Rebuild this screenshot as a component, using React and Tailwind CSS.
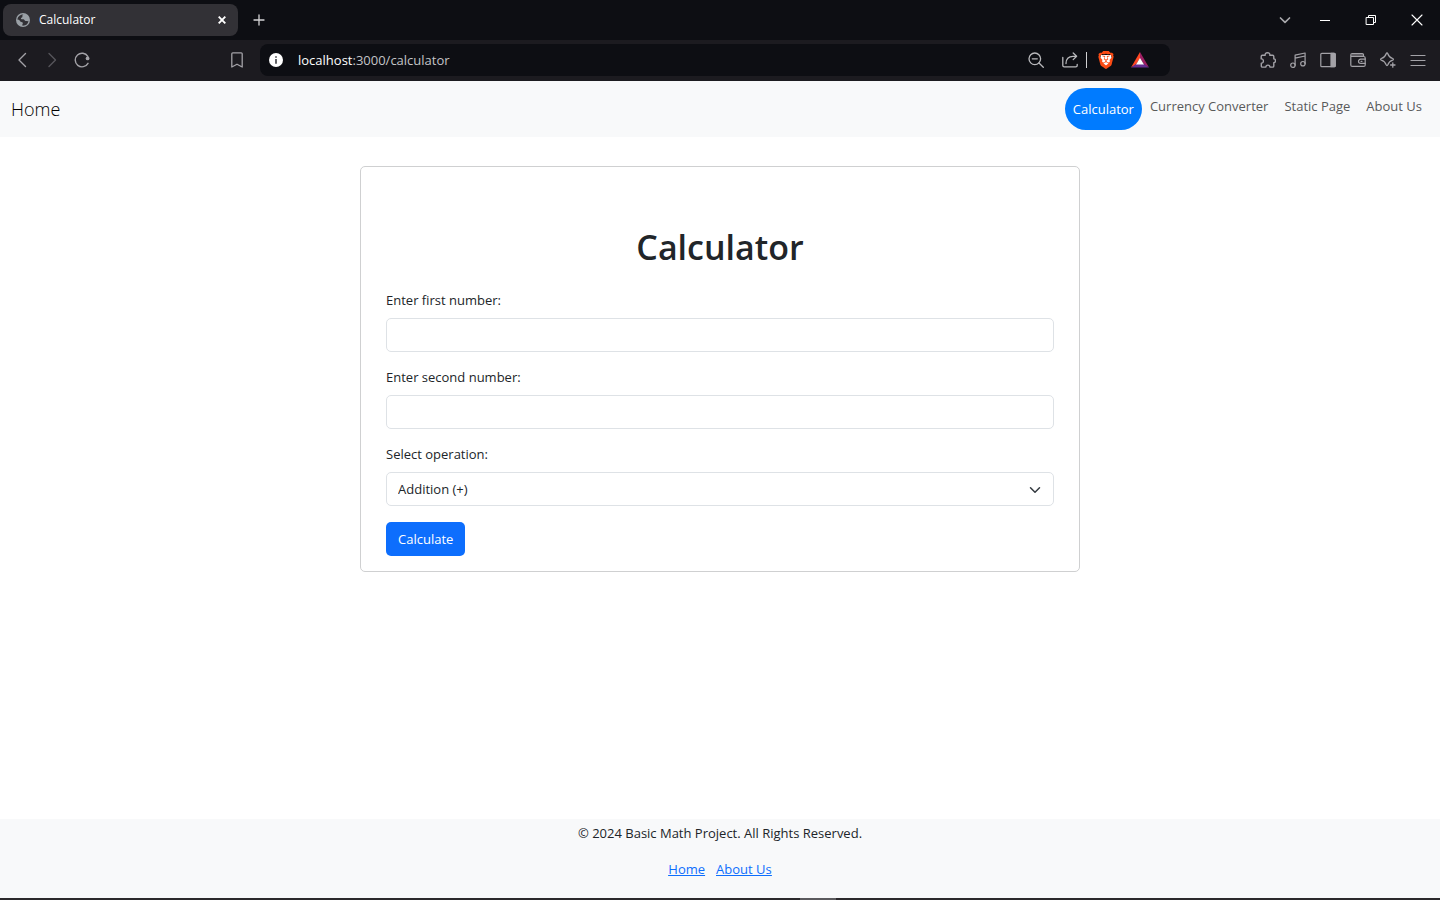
import React from 'react';
import { SiBrave } from 'react-icons/si';

function Icon({ children, className = '', width = 1.2 }) {
  return (
    <svg
      viewBox="0 0 16 16"
      className={`size-4 shrink-0 ${className}`}
      fill="none"
      stroke="currentColor"
      strokeWidth={width}
      strokeLinecap="round"
      strokeLinejoin="round"
      aria-hidden="true"
    >
      {children}
    </svg>
  );
}

function IconButton({ label, className = '', children }) {
  return (
    <button type="button" aria-label={label} className={`flex shrink-0 items-center justify-center ${className}`}>
      {children}
    </button>
  );
}

function TabStrip() {
  return (
    <div className="flex h-10 items-center bg-[#0d0e13] pl-[3px] text-[#d4d4d6]">
      <div className="flex h-8 w-[235px] items-center rounded-lg bg-[#323136] pr-2 pl-3">
        <svg viewBox="0 0 16 16" className="size-4 shrink-0" aria-hidden="true">
          <circle cx="8" cy="8" r="7" fill="#9aa0a6" />
          <path
            d="M8.6 2.6c-.9.2-1.4 1-1.2 1.8.1.7-.4 1.1-1 1.3-.6.1-.5.8-.2 1.3.3.4 1.500.1 2.300.3.9.2 1 1.100 1.500 1.400.7.4 1.900-.1 2.500.6l1-.5a5.700 5.700 0 0 1-5.600 4.900c-.8-.1-.7-.9-.4-1.400.3-.5.6-1.200.1-1.700-.6-.6-1.700-.3-2.300-1C4.800 8.800 4.500 8 3.700 7.800L2.300 7.400A5.800 5.800 0 0 1 8.600 2.600Z"
            fill="#323136"
          />
        </svg>
        <span className="ml-2 flex-1 text-[12px] leading-4 text-white">Calculator</span>
        <IconButton label="Close tab" className="size-4 text-white">
          <Icon width={1.9}>
            <path d="M4.700 4.700 11.300 11.300M11.300 4.700 4.700 11.300" strokeLinecap="butt" />
          </Icon>
        </IconButton>
      </div>
      <IconButton label="New tab" className="ml-[13px] size-4">
        <Icon width={1.3}>
          <path d="M8 3v10M3 8h10" />
        </Icon>
      </IconButton>
      <div className="flex-1" />
      <IconButton label="Search tabs" className="h-10 w-[34px] text-[#a9a9ad]">
        <Icon width={1.7}>
          <path d="m3.500 6 4.500 4.300L12.500 6" />
        </Icon>
      </IconButton>
      <IconButton label="Minimize" className="h-10 w-[46px] text-white">
        <Icon width={1}>
          <path d="M3 8.500h10" strokeLinecap="butt" />
        </Icon>
      </IconButton>
      <IconButton label="Restore" className="h-10 w-[46px] text-white">
        <Icon width={1}>
          <path d="M3.500 5.500h7v7h-7zM5.500 5.500v-2h7v7h-2" strokeLinejoin="miter" />
        </Icon>
      </IconButton>
      <IconButton label="Close window" className="h-10 w-[46px] text-white">
        <Icon width={1.1}>
          <path d="m3 3 10 10M13 3 3 13" />
        </Icon>
      </IconButton>
    </div>
  );
}

function Toolbar() {
  return (
    <div className="flex h-[41px] items-center border-b border-[#1c1b20] bg-[#1c1b20] px-3.5 text-[#a3a2a7]">
      <div className="flex gap-3.5">
        <IconButton label="Back">
          <Icon width={1.4}>
            <path d="M11.500 1.500 5 8l6.500 6.500" />
          </Icon>
        </IconButton>
        <IconButton label="Forward" className="text-[#56555a]">
          <Icon width={1.4}>
            <path d="M5 1.500 11.500 8 5 14.500" />
          </Icon>
        </IconButton>
        <IconButton label="Reload">
          <Icon width={1.4}>
            <path d="M13.800 4.400A6.800 6.800 0 1 0 14 11.300" />
            <circle cx="13.600" cy="6.400" r="1.900" fill="currentColor" stroke="none" />
          </Icon>
        </IconButton>
      </div>
      <IconButton label="Bookmark this page" className="ml-[139px]">
        <Icon width={1.3}>
          <path d="M3.800.8h8.400c.6 0 1 .4 1 1v13.200L8 12.200 2.800 15V1.800c0-.6.4-1 1-1Z" />
        </Icon>
      </IconButton>
      <div className="ml-[15px] flex h-8 flex-1 items-center rounded-lg bg-[#0d0e13] pr-[21px] pl-2 text-[#b9b9bc]">
        <IconButton label="View site information">
          <svg viewBox="0 0 16 16" className="size-4" aria-hidden="true">
            <circle cx="8" cy="8" r="7" fill="#fff" />
            <path d="M7.200 4.200h1.600v1.600H7.200zM7.200 7h1.600v4.800H7.200z" fill="#3c3c42" />
          </svg>
        </IconButton>
        <p className="ml-3.5 flex-1 text-[13px] leading-5 text-[#c4c4c7]">
          <span className="text-white">localhost</span>:3000/calculator
        </p>
        <IconButton label="Zoom out">
          <Icon width={1.3}>
            <circle cx="6.800" cy="6.800" r="5.800" />
            <path d="m11 11 4.300 4.300M4.300 6.800h5" />
          </Icon>
        </IconButton>
        <IconButton label="Share" className="ml-[18px]">
          <Icon width={1.3}>
            <path d="M.8 5.500v8c0 .9.500 1.400 1.400 1.400h11.600c.9 0 1.400-.5 1.400-1.400v-1" />
            <path d="M4 11.500c0-4.500 2.500-7.200 7-7.200h3.500M11.200 1l3.400 3.300-3.400 3.300" />
          </Icon>
        </IconButton>
        <span className="ml-2 h-4 w-px bg-[#d0d0d2]" />
        <IconButton label="Brave Shields" className="ml-[10px] size-[18px]">
          <svg viewBox="0 0 18 18" className="size-[18px]" aria-hidden="true">
            <path d="M4 4h10l1 4-3 6-3 2-3-2-3-6z" fill="#fff" />
            <SiBrave size={18} color="#fb4b14" />
          </svg>
        </IconButton>
        <IconButton label="Brave Rewards" className="ml-4 size-[18px]">
          <svg viewBox="0 0 18 18" className="size-[18px]" aria-hidden="true">
            <path d="M9 1v6.200l-4 6.300-5 3z" fill="#ff4724" />
            <path d="M9 1v6.200l4 6.300 5 3z" fill="#9e1f63" />
            <path d="M0 16.500h18l-5-3.500H5z" fill="#662d91" />
            <path d="m9 7 4 6.500H5z" fill="#fff" />
          </svg>
        </IconButton>
      </div>
      <div className="ml-[90px] flex gap-3.5">
        <IconButton label="Extensions">
          <Icon width={1.4}>
            <path d="M2.300 3.300h2.900c-.3-1.600.6-2.600 2.300-2.600s2.600 1 2.300 2.600h2.800c.8 0 1.200.4 1.200 1.200v2.400c1 0 1.700.7 1.700 1.800s-.7 1.900-1.700 1.900v3.300c0 .8-.4 1.200-1.200 1.200H9.900c0-1.300-.7-2-2-2s-2 .7-2 2H2.500c-.8 0-1.200-.4-1.200-1.200v-2.700c1.300.1 2.100-.9 2.100-2.200S2.600 6.700 1.200 6.900V4.500c0-.8.300-1.200 1.100-1.200Z" />
          </Icon>
        </IconButton>
        <IconButton label="Media">
          <Icon width={1.2}>
            <circle cx="2.900" cy="13.200" r="2.200" />
            <circle cx="12.900" cy="11.700" r="2.200" />
            <path d="M5.100 13.200V3.200L15.100 1v10.700M5.100 6.200l10-2.200" />
          </Icon>
        </IconButton>
        <IconButton label="Sidebar">
          <Icon width={1.2}>
            <rect x=".8" y="1.300" width="14.400" height="13.400" rx="1" />
            <path d="M11 1.300h3.200c.6 0 1 .4 1 1v11.400c0 .6-.4 1-1 1H11z" fill="currentColor" />
          </Icon>
        </IconButton>
        <IconButton label="Wallet">
          <Icon width={1.2}>
            <path d="M13.500 4.500V2.800c0-.8-.4-1.300-1.200-1.300H2.200C1.300 1.500.8 2 .8 2.900S1.300 4.500 2.200 4.500h11.500c1 0 1.500.5 1.500 1.400v7c0 1-.5 1.500-1.500 1.500H2.300c-1 0-1.500-.5-1.500-1.500V3" />
            <path d="M2 3h11M15.200 7.200h-4.500c-1.400 0-2.200.9-2.200 2.100s.8 2.100 2.200 2.100h4.500M11 9.300h1" />
          </Icon>
        </IconButton>
        <IconButton label="Leo AI">
          <Icon width={1.3}>
            <path d="M7 1c.4 0 .6.2.8.700C8.700 4.500 9.700 5.600 12.700 6.500c.9.3.9 1.300 0 1.600-3 .9-4 2-4.900 4.800-.3.900-1.300.9-1.600 0C5.300 10.100 4.300 9 1.300 8.100c-.9-.3-.9-1.300 0-1.600 3-.9 4-2 4.900-4.800.2-.5.4-.7.8-.7Z" />
            <path d="M12.800 10.800v4.400M10.600 13H15" />
          </Icon>
        </IconButton>
        <IconButton label="Menu">
          <Icon width={1.2}>
            <path d="M1 3.500h14M1 8.500h14M1 13.500h14" />
          </Icon>
        </IconButton>
      </div>
    </div>
  );
}

function Navbar() {
  return (
    <nav className="flex h-14 items-start justify-between bg-[#f8f9fa] pt-[7px] pr-2.5 pl-[11px]">
      <a href="#home" className="py-2 text-[18px] leading-[26px] font-light text-black">
        Home
      </a>
      <div className="flex items-start text-[13px] leading-[22px] text-[#595a5a]">
        <a href="#calculator" className="rounded-[22px] bg-[#007bff] px-2 py-2.5 text-white">
          Calculator
        </a>
        <a href="#currency" className="px-2 py-[7px]">
          Currency Converter
        </a>
        <a href="#static" className="px-2 py-[7px]">
          Static Page
        </a>
        <a href="#about" className="px-2 py-[7px]">
          About Us
        </a>
      </div>
    </nav>
  );
}

function NumberField({ id, label }) {
  return (
    <div className="mb-3.5">
      <label htmlFor={id} className="mb-[7px] block">
        {label}
      </label>
      <input id={id} type="text" inputMode="decimal" className="block h-[34px] w-full rounded-[5px] border border-[#dee2e6] px-[11px]" />
    </div>
  );
}

function CalculatorForm() {
  return (
    <form
      onSubmit={(event) => event.preventDefault()}
      className="mx-auto mt-[29px] w-1/2 rounded-[5px] border border-[#cfd0d1] px-[25px] pt-[59px] pb-[15px] text-[13px] leading-[22px]"
    >
      <h1 className="mb-5 text-center text-[34px] leading-[43px] font-semibold">Calculator</h1>
      <NumberField id="first" label="Enter first number:" />
      <NumberField id="second" label="Enter second number:" />
      <label htmlFor="operation" className="mb-[7px] block">
        Select operation:
      </label>
      <div className="relative mb-4">
        <select id="operation" className="block h-[34px] w-full appearance-none rounded-[5px] border border-[#dee2e6] bg-white px-[11px]">
          <option>Addition (+)</option>
          <option>Subtraction (-)</option>
          <option>Multiplication (*)</option>
          <option>Division (/)</option>
        </select>
        <svg
          viewBox="0 0 16 16"
          className="pointer-events-none absolute top-3 right-[13px] size-3"
          fill="none"
          stroke="#343a40"
          strokeWidth="2"
          strokeLinecap="round"
          strokeLinejoin="round"
          aria-hidden="true"
        >
          <path d="m2 5 6 6 6-6" />
        </svg>
      </div>
      <button type="submit" className="block h-[34px] rounded-[5px] bg-[#0d6efd] px-3 text-white">
        Calculate
      </button>
    </form>
  );
}

export default function App() {
  return (
    <div className="flex min-h-screen flex-col bg-white font-['Open_Sans','Noto_Sans',sans-serif] text-[#212529]">
      <TabStrip />
      <Toolbar />
      <Navbar />
      <main className="flex-1">
        <CalculatorForm />
      </main>
      <footer className="bg-[#f8f9fa] pt-[3px] pb-[18px] text-center text-[13px] leading-[22px]">
        <p className="mb-3.5">© 2024 Basic Math Project. All Rights Reserved.</p>
        <div className="flex justify-center gap-[11px] text-[#0d6efd] underline">
          <a href="#home">Home</a>
          <a href="#about">About Us</a>
        </div>
      </footer>
      <div className="flex h-0.5 justify-center bg-[#2b292c]">
        <span className="ml-[196px] w-9 bg-[#5b5a5d]" />
      </div>
    </div>
  );
}
